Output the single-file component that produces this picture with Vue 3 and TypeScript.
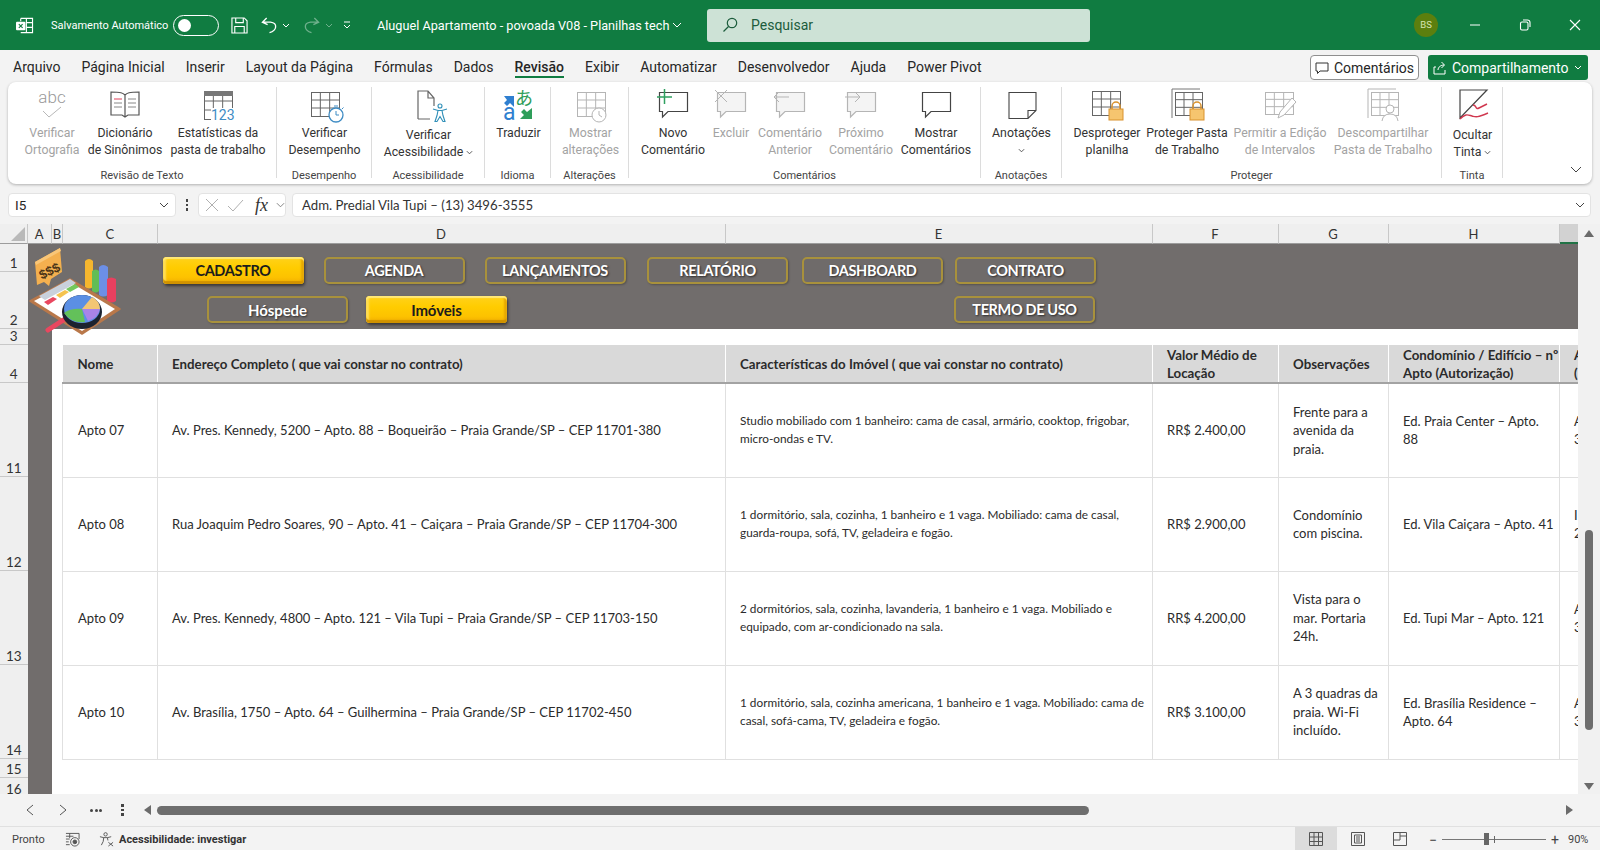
<template>
  <div class="app">
    <!-- barra de titulo -->
    <header class="titlebar">
      <svg class="xl-icon" viewBox="0 0 20 18" fill="none" stroke="#fff" stroke-width="1.2">
        <path d="M6 1.5h12.5v15H6M12 1.5v15M12 6h6.5M12 11h6.5M6 1.5v3" />
        <rect x="1" y="5" width="10" height="9" rx="1" fill="#fff" stroke="none" />
        <path d="M4 7.5l4 4M8 7.5l-4 4" stroke="#107c41" />
      </svg>
      <span class="autosave">Salvamento Automático</span>
      <span class="toggle"><i></i></span>
      <svg class="qa save" viewBox="0 0 18 18" fill="none" stroke="#fff" stroke-width="1.2">
        <path d="M1 1h13l3 3v13H1zM5 1v5h8V1M4 17v-7h10v7" />
      </svg>
      <svg class="qa undo" viewBox="0 0 18 18" fill="none" stroke="#fff" stroke-width="1.4">
        <path d="M6 1L1.5 5.5 7 8M2 5.5h8c8 1 7 9-1 11" />
      </svg>
      <svg class="mini c1" viewBox="0 0 8 5" fill="none" stroke="#fff"><path d="M1 1l3 3 3-3" /></svg>
      <svg class="qa redo" viewBox="0 0 18 18" fill="none" stroke="#6fb08c" stroke-width="1.4">
        <path d="M12 1l4.500 4.500L11 8M16 5.500H8c-8 1-7 9 1 11" />
      </svg>
      <svg class="mini c2" viewBox="0 0 8 5" fill="none" stroke="#6fb08c"><path d="M1 1l3 3 3-3" /></svg>
      <svg class="mini c3" viewBox="0 0 8 8" fill="none" stroke="#fff"><path d="M1 1h6M1 4l3 3 3-3" /></svg>
      <span class="doc-title">Aluguel Apartamento - povoada V08 - Planilhas tech</span>
      <svg class="mini c4" viewBox="0 0 10 6" fill="none" stroke="#fff"><path d="M1 1l4 4 4-4" /></svg>
      <div class="search">
        <svg viewBox="0 0 16 16" fill="none" stroke="#1c5c3c" stroke-width="1.2">
          <circle cx="10" cy="6" r="4.700" /><path d="M6.500 9.500L1.500 14.500" />
        </svg>
        <span>Pesquisar</span>
      </div>
      <span class="avatar">BS</span>
      <div class="win-btns">
        <svg viewBox="0 0 12 12" fill="none" stroke="#fff"><path d="M1 6h10" /></svg>
        <svg viewBox="0 0 12 12" fill="none" stroke="#fff" stroke-width="1.100">
          <rect x="1.500" y="3" width="7.500" height="8" rx="1.500" /><path d="M4 1h4.500A2.500 2.500 0 0 1 11 3.500V8" />
        </svg>
        <svg viewBox="0 0 12 12" fill="none" stroke="#fff" stroke-width="1.100"><path d="M1 1l10 10M11 1L1 11" /></svg>
      </div>
    </header>

    <!-- abas -->
    <nav class="tabs">
      <span v-for="t in tabs" :key="t" class="tab" :class="{ active: t === 'Revisão' }">{{ t }}</span>
      <button class="comments-btn">
        <svg viewBox="0 0 14 14" fill="none" stroke="#333"><path d="M1 2h12v8H5l-2.500 2.500V10H1z" /></svg>
        Comentários
      </button>
      <button class="share-btn">
        <svg viewBox="0 0 14 14" fill="none" stroke="#fff"><path d="M3 6H1v7h11V9M5 9c0-3 3-5 6-5M8.500 1l3 3-3 3" /></svg>
        Compartilhamento
        <svg class="chev" viewBox="0 0 8 5" fill="none" stroke="#fff"><path d="M1 1l3 3 3-3" /></svg>
      </button>
    </nav>

    <!-- faixa de opcoes -->
    <section class="ribbon">
      <div
        v-for="g in groups"
        :key="g.label"
        class="r-group"
        :style="{ width: g.w + 'px' }"
      >
        <div class="r-buttons" :style="{ paddingLeft: g.pad + 'px' }">
          <div
            v-for="b in g.buttons"
            :key="b.text"
            class="r-btn"
            :class="{ off: b.off, low: b.low }"
            :style="{ width: b.w + 'px' }"
          >
            <svg class="r-icon" viewBox="0 0 36 36" v-html="icons[b.icon]"></svg>
            <span class="r-text">{{ b.text }}<svg
                v-if="b.chev"
                class="r-chev"
                viewBox="0 0 8 5"
                fill="none"
                stroke="#444"
              ><path d="M1 1l3 3 3-3" /></svg></span>
          </div>
        </div>
        <div class="r-label">{{ g.label }}</div>
      </div>
      <svg class="r-collapse" viewBox="0 0 12 7" fill="none" stroke="#444"><path d="M1 1l5 5 5-5" /></svg>
    </section>

    <!-- barra de formulas -->
    <div class="formula">
      <div class="namebox">
        <span>I5</span>
        <svg viewBox="0 0 10 6" fill="none" stroke="#444"><path d="M1 1l4 4 4-4" /></svg>
      </div>
      <div class="dots"><i></i><i></i><i></i></div>
      <div class="fx-box">
        <svg class="fx-x" viewBox="0 0 14 14" fill="none" stroke="#b0b0b0"><path d="M1 1l12 12M13 1L1 13" /></svg>
        <svg class="fx-ok" viewBox="0 0 17 13" fill="none" stroke="#b0b0b0"><path d="M1 7l5 5L16 1" /></svg>
        <em>fx</em>
        <svg class="fx-chev" viewBox="0 0 10 6" fill="none" stroke="#777"><path d="M1 1l4 4 4-4" /></svg>
      </div>
      <div class="f-input">
        <span>Adm. Predial Vila Tupi – (13) 3496-3555</span>
        <svg viewBox="0 0 10 6" fill="none" stroke="#444"><path d="M1 1l4 4 4-4" /></svg>
      </div>
    </div>

    <!-- planilha -->
    <div class="sheet-wrap">
      <div class="sheet">
        <div class="col-heads">
          <div class="corner"><i></i></div>
          <div
            v-for="c in cols"
            :key="c.name"
            class="col-head"
            :class="{ selected: c.name === 'I' }"
            :style="{ width: c.w + 'px' }"
          >{{ c.name === 'I' ? '' : c.name }}</div>
        </div>
        <div class="sheet-body">
          <div class="row-heads">
            <div v-for="r in rowHeads" :key="r.n" class="row-head" :style="{ height: r.h + 'px' }">
              {{ r.n }}
            </div>
          </div>
          <div class="cells">
            <div class="band">
              <div class="nav-row first">
                <button v-for="n in navTop" :key="n" class="nav-btn" :class="{ on: n === 'CADASTRO' }">{{ n }}</button>
              </div>
              <div class="nav-row second">
                <button class="nav-btn sub">Hóspede</button>
                <button class="nav-btn sub on">Imóveis</button>
                <button class="nav-btn termo">TERMO DE USO</button>
              </div>
            </div>
            <div class="lower">
              <div class="strip"></div>
              <div class="table-wrap">
                <table class="grid-table">
                  <colgroup>
                    <col v-for="w in tableCols" :key="w" :style="{ width: w + 'px' }" />
                  </colgroup>
                  <thead>
                    <tr>
                      <th v-for="h in tableHead" :key="h">{{ h }}</th>
                    </tr>
                  </thead>
                  <tbody>
                    <tr v-for="a in apartments" :key="a.nome">
                      <td>{{ a.nome }}</td>
                      <td>{{ a.endereco }}</td>
                      <td class="small">{{ a.carac }}</td>
                      <td>{{ a.valor }}</td>
                      <td>{{ a.obs }}</td>
                      <td>{{ a.cond }}</td>
                      <td>{{ a.adm }}</td>
                    </tr>
                  </tbody>
                </table>
              </div>
            </div>
          </div>
          <!-- logo sobre a faixa -->
          <svg class="logo" viewBox="0 0 120 100">
            <path d="M15 22L40 8l2 24-11 7-2 7-5-4-7 3z" fill="#f4b04f" />
            <path d="M15 22L40 8l1 3-25 14z" fill="#f9c678" />
            <text x="18" y="36" font-size="13" font-weight="700" font-family="Liberation Sans, sans-serif" fill="#4a3418" transform="rotate(-26 28 30)">$$$</text>
            <path d="M65 21q4-4 8 0v26q-4 3-8 0z" fill="#f5b62e" />
            <path d="M72 31q4-3 7 0v20q-3 3-7 0z" fill="#62bd55" />
            <path d="M79 27q4-4 9 0v28q-5 3-9 0z" fill="#6c8fe6" />
            <path d="M87 39q4-3 9 0v22q-5 3-9 0z" fill="#e8405f" />
            <path d="M10 61l40-22 50 30-38 25z" fill="#b9784a" stroke="#b9784a" stroke-width="1.500" stroke-linejoin="round" />
            <path d="M14 61l36-19 45 27-33 22z" fill="#fff" />
            <path d="M19 56l31-17 6 4-31 17z" fill="#c9d1dc" />
            <path d="M24 62l9-5 4 2-9 6z" fill="#e9475f" />
            <path d="M36 55l9-5 4 2-9 6z" fill="#f5c34e" />
            <path d="M46 49l9-5 4 3-9 5z" fill="#74c95c" />
            <path d="M28 90l20-13" stroke="#e9475f" stroke-width="5" stroke-linecap="round" />
            <ellipse cx="62" cy="72" rx="20" ry="17" fill="#1c2330" />
            <ellipse cx="62" cy="69" rx="18" ry="14" fill="#5b8fe4" />
            <path d="M62 69l10-12q8 4 8 12z" fill="#f3c674" />
            <path d="M62 69l18 0q-2 9-12 12z" fill="#a983e8" />
            <path d="M62 69l3 13q-13 2-21-9 7-5 18-4z" fill="#63c15a" />
          </svg>
        </div>
      </div>
      <aside class="v-scroll">
        <svg viewBox="0 0 10 7" fill="#6b6b6b"><path d="M5 0l5 7H0z" /></svg>
        <div class="v-track"><i></i></div>
        <svg viewBox="0 0 10 7" fill="#6b6b6b"><path d="M0 0h10L5 7z" /></svg>
      </aside>
    </div>

    <!-- abas de planilha -->
    <div class="sheet-tabs">
      <svg class="st-icon prev" viewBox="0 0 8 12" fill="none" stroke="#555"><path d="M7 1L1 6l6 5" /></svg>
      <svg class="st-icon next" viewBox="0 0 8 12" fill="none" stroke="#555"><path d="M1 1l6 5-6 5" /></svg>
      <span class="more"><i></i><i></i><i></i></span>
      <span class="vdots"><i></i><i></i><i></i></span>
      <svg class="arrow-l" viewBox="0 0 7 10" fill="#6b6b6b"><path d="M7 0v10L0 5z" /></svg>
      <div class="h-thumb"></div>
      <svg class="arrow-r" viewBox="0 0 7 10" fill="#6b6b6b"><path d="M0 0v10l7-5z" /></svg>
    </div>

    <!-- barra de status -->
    <footer class="status">
      <span class="ready">Pronto</span>
      <svg class="st-rec" viewBox="0 0 16 16" fill="none" stroke="#555">
        <path d="M1 1.500h14M1 4.500h8M1 7.500h4M1 10.500h3M1 13.500h4M5 1.500v5M15 1.500v6" />
        <circle cx="10.500" cy="10.500" r="4.500" /><circle cx="10.500" cy="10.500" r="2" fill="#555" />
      </svg>
      <svg class="st-a11y" viewBox="0 0 16 16" fill="none" stroke="#555">
        <circle cx="7" cy="2.500" r="1.800" />
        <path d="M1 5l4 1h4l4-1M5 6l-.5 4-2 4M9 6l.5 3M10 11l5 4M15 11l-5 4" />
      </svg>
      <span class="a11y-text">Acessibilidade: investigar</span>
      <div class="views">
        <span class="view on">
          <svg viewBox="0 0 14 14" fill="none" stroke="#555"><path d="M.5.5h13v13H.5zM5 .5v13M9.500.5v13M.5 5h13M.5 9.500h13" /></svg>
        </span>
        <span class="view">
          <svg viewBox="0 0 14 14" fill="none" stroke="#555"><path d="M.5.5h13v13H.5zM3.500 3h7v8h-7zM5 5h4M5 7h4M5 9h4" /></svg>
        </span>
        <span class="view">
          <svg viewBox="0 0 14 14" fill="none" stroke="#555"><path d="M.5.5h13v13H.5zM.5 8h6.500V.5M7 4h6.500" /></svg>
        </span>
      </div>
      <div class="zoom-ctl">
        <span class="z-sign">−</span>
        <div class="slider"><i class="tick"></i><i class="knob"></i></div>
        <span class="z-sign">+</span>
        <span class="z-val">90%</span>
      </div>
    </footer>
  </div>
</template>

<script setup lang="ts">
interface RibbonBtn {
  text: string
  icon: string
  w: number
  off?: boolean
  low?: boolean
  chev?: boolean
}

interface RibbonGroup {
  label: string
  w: number
  pad: number
  buttons: RibbonBtn[]
}

const tabs = [
  'Arquivo', 'Página Inicial', 'Inserir', 'Layout da Página', 'Fórmulas', 'Dados',
  'Revisão', 'Exibir', 'Automatizar', 'Desenvolvedor', 'Ajuda', 'Power Pivot'
]

// desenha uma tabelinha dos icones da faixa
const grid = (x: number, y: number, w: number, h: number, c = '#666') =>
  `<g fill="none" stroke="${c}"><rect x="${x + 0.5}" y="${y + 0.5}" width="${w}" height="${h}"/>` +
  `<path d="M${x} ${y + h / 3}h${w}M${x} ${y + (2 * h) / 3}h${w}M${x + w / 3} ${y}v${h}M${x + (2 * w) / 3} ${y}v${h}"/></g>`

const bubble = (c: string, fill = 'none') =>
  `<path d="M4.500 4.500h28v19H13l-5.500 5.500v-5.500h-3z" fill="${fill}" stroke="${c}" stroke-width="1.200"/>`

const lock = (x: number, y: number) =>
  `<path d="M${x + 3} ${y + 8}v-3a4 4 0 0 1 8 0v3" fill="none" stroke="#d9922e" stroke-width="1.500"/>` +
  `<rect x="${x}" y="${y + 8}" width="14" height="11" fill="#f6c56f" stroke="#d9922e"/>`

const icons: Record<string, string> = {
  abc:
    `<text x="18" y="15" text-anchor="middle" font-size="17" font-family="Roboto, sans-serif" font-weight="300" fill="#9a9a9a">abc</text>` +
    `<path d="M9 23l6 6 12-10" fill="none" stroke="#b8b8b8"/>`,
  book:
    `<path d="M18 7c-2-2-4-3-14-3v23h11l3 2 3-2h11V4c-10 0-12 1-14 3zM18 7v22" fill="none" stroke="#555" stroke-width="1.200"/>` +
    `<path d="M7 11h8" stroke="#e0405a"/><path d="M7 15h8M7 19h8M21 11h8M21 15h8M21 19h8" stroke="#888"/>`,
  stats:
    grid(4, 4, 28, 27) +
    `<rect x="4" y="3" width="29" height="5" fill="#777"/><rect x="11" y="20" width="24" height="13" fill="#fff"/>` +
    `<text x="11" y="32" font-size="14" font-family="Roboto, sans-serif" fill="#3f8cc4">123</text>`,
  perf:
    grid(4, 4, 28, 24) +
    `<circle cx="29" cy="27" r="7" fill="#fff" stroke="#3f8cc4" stroke-width="1.300"/><path d="M29 23v4h3M27 18h4M35 21l1.500-1.500" fill="none" stroke="#3f8cc4"/>`,
  a11y:
    `<path d="M7 31V3h10l6 7v8M17 3v7h6M7 31h12" fill="none" stroke="#666" stroke-width="1.200"/>` +
    `<g transform="translate(3 1)" fill="none" stroke="#2f8fb8" stroke-width="1.100"><circle cx="26" cy="17" r="2"/><path d="M19 20l5 1.500h4l5-1.500M24 21.500l-1 5-2 6h2l3-5 3 5h2l-2-6-1-5"/></g>`,
  translate:
    `<path d="M3 8h10v11l-4-4-3 3-3-3 3-3z" fill="#2f7fd0"/>` +
    `<text x="14" y="17" font-size="18" font-family="Noto Sans CJK JP, sans-serif" fill="#2f9e5a">あ</text>` +
    `<text x="2" y="32" font-size="23" font-family="Roboto, sans-serif" fill="#2f7fd0">a</text>` +
    `<path d="M31 20v11H19l4-4-3-3 3-3 3 3z" fill="#2f9e5a"/>`,
  changes:
    grid(4, 4, 28, 24, '#b5b5b5') +
    `<circle cx="26" cy="27" r="7" fill="#fff" stroke="#b5b5b5"/><path d="M26 23v4l3 2" fill="none" stroke="#b5b5b5"/>`,
  newc:
    bubble('#444') + `<path d="M2 9h15M9.500 1v15" stroke="#2fa060" stroke-width="1.500"/>`,
  delc:
    bubble('#b5b5b5', '#f4f4f4') + `<path d="M2 2l12 12M14 2L2 14" stroke="#b5b5b5"/>`,
  prevc:
    bubble('#b5b5b5', '#f4f4f4') + `<path d="M17 9H2M7 4L2 9l5 5" fill="none" stroke="#b5b5b5"/>`,
  nextc:
    bubble('#b5b5b5', '#f4f4f4') + `<path d="M2 9h15M12 4l5 5-5 5" fill="none" stroke="#b5b5b5"/>`,
  showc: bubble('#444'),
  note:
    `<path d="M5 4.500h27v18l-8 8H5zM32 22.500h-8v8" fill="none" stroke="#444" stroke-width="1.100"/>`,
  unprot: grid(3, 3, 28, 24) + lock(20, 13),
  prot:
    `<path d="M3 30V1h28" fill="none" stroke="#777"/>` + grid(6, 4, 27, 23) + lock(21, 13),
  range:
    grid(3, 4, 28, 22, '#b5b5b5') +
    `<path d="M16 30l2-6L30 10l4 4-12 13z" fill="#fff" stroke="#b5b5b5"/>`,
  unshare:
    `<path d="M3 30V1h28" fill="none" stroke="#b5b5b5"/>` +
    grid(6, 4, 27, 23, '#b5b5b5') +
    `<circle cx="25" cy="21" r="4" fill="#fff" stroke="#b5b5b5"/><path d="M17 33q1-7 8-7t8 7" fill="#fff" stroke="#b5b5b5"/>`,
  ink:
    `<path d="M5 30V2h27z" fill="none" stroke="#444" stroke-width="1.200"/>` +
    `<path d="M18 17c4 0 2 5 6 3l8-4M5 31c6-6 8-4 12-3s4 2 16-3" fill="none" stroke="#d0384f" stroke-width="1.400"/>`
}

const groups: RibbonGroup[] = [
  {
    label: 'Revisão de Texto', w: 269, pad: 12,
    buttons: [
      { text: 'Verificar\nOrtografia', icon: 'abc', w: 64, off: true },
      { text: 'Dicionário\nde Sinônimos', icon: 'book', w: 82 },
      { text: 'Estatísticas da\npasta de trabalho', icon: 'stats', w: 104 }
    ]
  },
  { label: 'Desempenho', w: 95, pad: 0, buttons: [{ text: 'Verificar\nDesempenho', icon: 'perf', w: 95 }] },
  { label: 'Acessibilidade', w: 113, pad: 0, buttons: [{ text: 'Verificar\nAcessibilidade ', icon: 'a11y', w: 113, low: true, chev: true }] },
  { label: 'Idioma', w: 66, pad: 1, buttons: [{ text: 'Traduzir', icon: 'translate', w: 65 }] },
  { label: 'Alterações', w: 78, pad: 1, buttons: [{ text: 'Mostrar\nalterações', icon: 'changes', w: 77, off: true }] },
  {
    label: 'Comentários', w: 352, pad: 15,
    buttons: [
      { text: 'Novo\nComentário', icon: 'newc', w: 58 },
      { text: 'Excluir', icon: 'delc', w: 58, off: true },
      { text: 'Comentário\nAnterior', icon: 'prevc', w: 60, off: true },
      { text: 'Próximo\nComentário', icon: 'nextc', w: 82, off: true },
      { text: 'Mostrar\nComentários', icon: 'showc', w: 68 }
    ]
  },
  { label: 'Anotações', w: 81, pad: 0, buttons: [{ text: 'Anotações\n', icon: 'note', w: 81, chev: true }] },
  {
    label: 'Proteger', w: 380, pad: 5,
    buttons: [
      { text: 'Desproteger\nplanilha', icon: 'unprot', w: 80 },
      { text: 'Proteger Pasta\nde Trabalho', icon: 'prot', w: 80 },
      { text: 'Permitir a Edição\nde Intervalos', icon: 'range', w: 106, off: true },
      { text: 'Descompartilhar\nPasta de Trabalho', icon: 'unshare', w: 100, off: true }
    ]
  },
  { label: 'Tinta', w: 61, pad: 0, buttons: [{ text: 'Ocultar\nTinta ', icon: 'ink', w: 61, low: true, chev: true }] }
]

const cols = [
  { name: 'A', w: 24.5 }, { name: 'B', w: 11 }, { name: 'C', w: 94.5 }, { name: 'D', w: 568 },
  { name: 'E', w: 427 }, { name: 'F', w: 126 }, { name: 'G', w: 110 }, { name: 'H', w: 171 }, { name: 'I', w: 19 }
]

const rowHeads = [
  { n: 1, h: 28 }, { n: 2, h: 57 }, { n: 3, h: 16 }, { n: 4, h: 38 },
  { n: 11, h: 94 }, { n: 12, h: 94 }, { n: 13, h: 94 }, { n: 14, h: 94 },
  { n: 15, h: 19 }, { n: 16, h: 16 }
]

const navTop = ['CADASTRO', 'AGENDA', 'LANÇAMENTOS', 'RELATÓRIO', 'DASHBOARD', 'CONTRATO']

const tableCols = [95, 568, 427, 126, 110, 171, 19]

const tableHead = [
  'Nome',
  'Endereço Completo ( que vai constar no contrato)',
  'Características do Imóvel ( que vai constar no contrato)',
  'Valor Médio de\nLocação',
  'Observações',
  'Condomínio / Edifício – nº\nApto (Autorização)',
  'A\n('
]

const apartments = [
  {
    nome: 'Apto 07',
    endereco: 'Av. Pres. Kennedy, 5200 – Apto. 88 – Boqueirão – Praia Grande/SP – CEP 11701-380',
    carac: 'Studio mobiliado com 1 banheiro: cama de casal, armário, cooktop, frigobar,\nmicro-ondas e TV.',
    valor: 'RR$ 2.400,00',
    obs: 'Frente para a\navenida da\npraia.',
    cond: 'Ed. Praia Center – Apto.\n88',
    adm: 'A\n3'
  },
  {
    nome: 'Apto 08',
    endereco: 'Rua Joaquim Pedro Soares, 90 – Apto. 41 – Caiçara – Praia Grande/SP – CEP 11704-300',
    carac: '1 dormitório, sala, cozinha, 1 banheiro e 1 vaga. Mobiliado: cama de casal,\nguarda-roupa, sofá, TV, geladeira e fogão.',
    valor: 'RR$ 2.900,00',
    obs: 'Condomínio\ncom piscina.',
    cond: 'Ed. Vila Caiçara – Apto. 41',
    adm: 'I\n2'
  },
  {
    nome: 'Apto 09',
    endereco: 'Av. Pres. Kennedy, 4800 – Apto. 121 – Vila Tupi – Praia Grande/SP – CEP 11703-150',
    carac: '2 dormitórios, sala, cozinha, lavanderia, 1 banheiro e 1 vaga. Mobiliado e\nequipado, com ar-condicionado na sala.',
    valor: 'RR$ 4.200,00',
    obs: 'Vista para o\nmar. Portaria\n24h.',
    cond: 'Ed. Tupi Mar – Apto. 121',
    adm: 'A\n3'
  },
  {
    nome: 'Apto 10',
    endereco: 'Av. Brasília, 1750 – Apto. 64 – Guilhermina – Praia Grande/SP – CEP 11702-450',
    carac: '1 dormitório, sala, cozinha americana, 1 banheiro e 1 vaga. Mobiliado: cama de\ncasal, sofá-cama, TV, geladeira e fogão.',
    valor: 'RR$ 3.100,00',
    obs: 'A 3 quadras da\npraia. Wi-Fi\nincluído.',
    cond: 'Ed. Brasília Residence –\nApto. 64',
    adm: 'A\n3'
  }
]
</script>

<style scoped>
/* ========== estrutura ========== */
.app {
  width: 1600px;
  height: 850px;
  display: flex;
  flex-direction: column;
  overflow: hidden;
  background: #f3f3f3;
  color: #262626;
  font-family: Roboto, "Liberation Sans", sans-serif;
}

svg {
  display: block;
  flex-shrink: 0;
}

/* ========== barra de titulo ========== */
.titlebar {
  height: 50px;
  flex-shrink: 0;
  display: flex;
  align-items: center;
  background: #107c41;
  color: #fff;
}

.xl-icon {
  width: 19px;
  height: 17px;
  margin-left: 15px;
}

.autosave {
  margin-left: 17px;
  font-size: 11px;
  width: 120px;
  white-space: nowrap;
}

.toggle {
  width: 46px;
  height: 21px;
  margin-left: 2px;
  box-sizing: border-box;
  border: 1.5px solid #fff;
  border-radius: 11px;
  display: flex;
  align-items: center;
  padding-left: 4px;
}

.toggle i {
  width: 13px;
  height: 13px;
  border-radius: 50%;
  background: #fff;
}

.qa {
  width: 17px;
  height: 17px;
}

.save { margin-left: 12px; }
.undo { margin-left: 13px; }
.mini { width: 8px; height: 5px; }
.c1 { margin-left: 4px; }
.redo { margin-left: 13px; }
.c2 { margin-left: 5px; }
.c3 { margin-left: 10px; height: 8px; }

.doc-title {
  margin-left: 26px;
  font-size: 12.700px;
  width: 292px;
  white-space: nowrap;
}

.c4 {
  width: 10px;
  height: 6px;
  margin-left: 3px;
}

.search {
  width: 383px;
  height: 33px;
  margin-left: 25px;
  display: flex;
  align-items: center;
  background: #cde2d6;
  border-radius: 3px;
  color: #1c5c3c;
  font-size: 14px;
}

.search svg {
  width: 16px;
  height: 16px;
  margin: 0 13px 0 15px;
}

.avatar {
  width: 24px;
  height: 24px;
  margin-left: 324px;
  border-radius: 50%;
  background: #5c7f0e;
  color: #d5e3b0;
  font-size: 9.500px;
  line-height: 24px;
  text-align: center;
}

.win-btns {
  display: flex;
  align-items: center;
  margin-left: 31px;
  gap: 38px;
}

.win-btns svg {
  width: 12px;
  height: 12px;
}

/* ========== abas ========== */
.tabs {
  height: 32px;
  flex-shrink: 0;
  box-sizing: border-box;
  padding-top: 2px;
  display: flex;
  align-items: center;
  gap: 21px;
  padding-left: 13px;
  font-size: 14px;
  position: relative;
}

.tab {
  position: relative;
  white-space: nowrap;
}

.tab.active {
  font-weight: 500;
}

.tab.active::after {
  content: "";
  position: absolute;
  left: 0;
  right: 0;
  bottom: -3px;
  height: 2px;
  background: #107c41;
}

.comments-btn,
.share-btn {
  height: 25px;
  box-sizing: border-box;
  display: flex;
  align-items: center;
  font-family: inherit;
  font-size: 14px;
  padding: 0;
  margin-top: 1px;
}

.comments-btn {
  width: 109px;
  margin-left: auto;
  justify-content: center;
  gap: 5px;
  background: #fff;
  border: 1px solid #8f8f8f;
  border-radius: 4px;
  color: #262626;
}

.comments-btn svg,
.share-btn svg {
  width: 14px;
  height: 14px;
}

.share-btn {
  width: 160px;
  margin-left: -12px;
  margin-right: 12px;
  gap: 5px;
  padding-left: 5px;
  background: #107c41;
  border: none;
  border-radius: 3px;
  color: #fff;
}

.share-btn svg.chev {
  width: 8px;
  height: 5px;
}

/* ========== faixa de opcoes ========== */
.ribbon {
  height: 102px;
  flex-shrink: 0;
  margin: 0 8px;
  padding-top: 5px;
  box-sizing: border-box;
  display: flex;
  position: relative;
  background: #fff;
  border-radius: 8px;
  box-shadow: 0 1px 3px rgba(0, 0, 0, 0.28);
}

.r-group {
  height: 91px;
  flex-shrink: 0;
  box-sizing: border-box;
  display: flex;
  flex-direction: column;
  border-right: 1px solid #dcdcdc;
}

.r-buttons {
  display: flex;
}

.r-btn {
  display: flex;
  flex-direction: column;
  align-items: center;
  flex-shrink: 0;
  color: #333;
}

.r-btn.off {
  color: #a3a3a3;
}

.r-icon {
  width: 36px;
  height: 36px;
  margin-top: 1px;
  margin-bottom: -5px;
  overflow: visible;
}

.r-text {
  margin-top: 6px;
  font-size: 12.300px;
  line-height: 17px;
  text-align: center;
  white-space: pre;
}

.r-btn.low .r-text {
  margin-top: 8px;
}

.r-chev {
  display: inline-block;
  width: 7px;
  height: 5px;
  vertical-align: 1px;
}

.r-label {
  margin-top: auto;
  margin-bottom: -4.500px;
  font-size: 11px;
  line-height: 14px;
  text-align: center;
  color: #444;
}

.r-collapse {
  position: absolute;
  right: 10px;
  bottom: 11px;
  width: 12px;
  height: 7px;
}

/* ========== barra de formulas ========== */
.formula {
  height: 24px;
  flex-shrink: 0;
  margin: 9px 9px 7px 8px;
  display: flex;
  align-items: stretch;
  font-size: 13.500px;
}

.namebox,
.fx-box,
.f-input {
  display: flex;
  align-items: center;
  background: #fff;
  border: 1px solid #e3e3e3;
  border-radius: 4px;
  box-sizing: border-box;
}

.namebox {
  width: 168px;
  padding: 0 6px 0 6px;
  justify-content: space-between;
}

.namebox svg,
.f-input svg {
  width: 10px;
  height: 6px;
}

.dots {
  width: 22px;
  display: flex;
  flex-direction: column;
  align-items: center;
  justify-content: center;
  gap: 2px;
}

.dots i {
  width: 2.500px;
  height: 2.500px;
  background: #444;
}

.fx-box {
  width: 88px;
  padding-left: 6px;
}

.fx-x {
  width: 14px;
  height: 14px;
}

.fx-ok {
  width: 17px;
  height: 13px;
  margin-left: 8px;
}

.fx-box em {
  font-family: "Liberation Serif", serif;
  font-size: 18px;
  color: #333;
  margin-left: 11px;
}

.fx-chev {
  width: 9px;
  height: 6px;
  margin-left: 8px;
}

.f-input {
  width: 1299px;
  margin-left: 6px;
  padding: 0 5px 0 9px;
  justify-content: space-between;
  font-family: Lato, sans-serif;
  font-size: 13.200px;
  color: #333;
}

/* ========== planilha ========== */
.sheet-wrap {
  height: 570px;
  flex-shrink: 0;
  display: flex;
  overflow: hidden;
}

.sheet {
  width: 1578px;
  flex-shrink: 0;
  background: #fff;
  font-family: Lato, sans-serif;
}

.col-heads {
  height: 20px;
  display: flex;
  background: #efefef;
}

.corner {
  width: 27.500px;
  flex-shrink: 0;
  position: relative;
  box-sizing: border-box;
  border-right: 1px solid #c8c8c8;
  border-bottom: 1px solid #9c9c9c;
}

.corner i {
  position: absolute;
  right: 2px;
  bottom: 2px;
  border-style: solid;
  border-width: 0 0 14px 14px;
  border-color: transparent transparent #b9b9b9 transparent;
}

.col-head {
  flex-shrink: 0;
  box-sizing: border-box;
  border-right: 1px solid #c8c8c8;
  border-bottom: 1px solid #9c9c9c;
  font-size: 13px;
  line-height: 20px;
  text-align: center;
  color: #333;
}

.col-head.selected {
  background: #d2d2d2;
  border-right: 0;
  border-bottom: 2px solid #217346;
}

.sheet-body {
  height: 550px;
  display: flex;
  position: relative;
  overflow: hidden;
}

.row-heads {
  width: 27.500px;
  flex-shrink: 0;
  background: #efefef;
}

.row-head {
  box-sizing: border-box;
  display: flex;
  align-items: flex-end;
  justify-content: center;
  font-size: 13.500px;
  line-height: 15px;
  color: #333;
  border-bottom: 1px solid #c8c8c8;
}

.row-head:last-child {
  line-height: 10px;
  border-bottom: 0;
}

.cells {
  flex: 1;
  min-width: 0;
}

/* ========== menu da planilha ========== */
.band {
  height: 85px;
  box-sizing: border-box;
  padding-top: 13px;
  background: #716d6c;
}

.nav-row {
  display: flex;
}

.nav-row.first {
  padding-left: 135px;
  gap: 20px;
}

.nav-row.first .nav-btn:nth-child(4) {
  margin-left: 1.500px;
}

.nav-row.first .nav-btn:nth-child(5) {
  margin-left: -6px;
}

.nav-row.first .nav-btn:nth-child(6) {
  margin-left: -8px;
}

.nav-row.second {
  margin-top: 12px;
  padding-left: 179.500px;
  gap: 18px;
}

.nav-btn {
  width: 141px;
  height: 27px;
  padding: 0;
  flex-shrink: 0;
  box-sizing: border-box;
  background: #6f6b6a;
  border: 2px solid #a8913c;
  border-radius: 5px;
  color: #fff;
  font-family: Lato, sans-serif;
  font-size: 14.500px;
  letter-spacing: -0.35px;
  font-weight: 700;
  text-shadow: 1px 1px 2px rgba(0, 0, 0, 0.6);
  box-shadow: 1px 1px 2px rgba(0, 0, 0, 0.25);
}

.nav-btn.sub {
  font-size: 15px;
  letter-spacing: -0.1px;
}

.nav-btn.on {
  border: none;
  border-radius: 4px;
  background: linear-gradient(#ffd21c 0, #ffcc00 40%, #fdc200 75%, #f0ac00 100%);
  color: #1c1c1c;
  text-shadow: none;
  box-shadow:
    inset 0 2px 1px #ffe878,
    inset 0 -3px 1px #d09200,
    inset 3px 0 2px #ffde55,
    inset -3px 0 2px #e6a800,
    1px 2px 3px rgba(0, 0, 0, 0.5);
}

.nav-btn.termo {
  margin-left: 429px;
}

.logo {
  position: absolute;
  left: 20px;
  top: -4px;
  width: 120px;
  height: 100px;
  pointer-events: none;
}

.lower {
  height: 465px;
  display: flex;
}

.strip {
  width: 24.500px;
  flex-shrink: 0;
  background: #716d6c;
}

.table-wrap {
  flex: 1;
  min-width: 0;
  padding: 16px 0 0 10px;
  overflow: hidden;
}

/* ========== tabela ========== */
.grid-table {
  width: 1516px;
  table-layout: fixed;
  border-collapse: collapse;
  font-size: 13px;
  line-height: 18.500px;
  color: #2b2b2b;
}

.grid-table th {
  height: 38px;
  padding: 0 0 0 14px;
  box-sizing: border-box;
  background: #d9d9d9;
  border-right: 1px solid #fff;
  border-bottom: 2px solid #a3a3a3;
  font-size: 13.300px;
  font-weight: 700;
  line-height: 18px;
  text-align: left;
  white-space: pre;
  overflow: hidden;
}

.grid-table td {
  height: 94px;
  padding: 0 0 0 14px;
  box-sizing: border-box;
  border: 1px solid #e0e0e0;
  white-space: pre;
  overflow: hidden;
}

.grid-table th:first-child,
.grid-table td:first-child {
  padding-left: 15px;
}

.grid-table td.small {
  font-size: 11.800px;
  line-height: 18px;
}

/* ========== rolagem ========== */
.v-scroll {
  flex: 1;
  display: flex;
  flex-direction: column;
  align-items: center;
  padding: 6px 0 4px;
  box-sizing: border-box;
  background: #f1f1f1;
}

.v-scroll svg {
  width: 10px;
  height: 7px;
}

.v-track {
  flex: 1;
  width: 8px;
}

.v-track i {
  display: block;
  width: 8px;
  height: 200px;
  margin-top: 293px;
  border-radius: 4px;
  background: #6e6e6e;
}

.sheet-tabs {
  height: 33px;
  flex-shrink: 0;
  display: flex;
  align-items: center;
  position: relative;
  border-bottom: 1px solid #e0e0e0;
  box-sizing: border-box;
}

.st-icon {
  width: 8px;
  height: 12px;
}

.prev { margin-left: 26px; }
.next { margin-left: 25px; }

.more {
  margin-left: 23px;
  width: 12px;
  display: flex;
  gap: 1.500px;
}

.more i {
  width: 3px;
  height: 3px;
  border-radius: 50%;
  background: #444;
}

.vdots {
  margin-left: 19px;
  display: flex;
  flex-direction: column;
  gap: 2px;
}

.vdots i {
  width: 2.500px;
  height: 2.500px;
  background: #444;
}

.arrow-l {
  width: 7px;
  height: 10px;
  margin-left: 20px;
}

.h-thumb {
  width: 932px;
  height: 9px;
  margin-left: 6px;
  border-radius: 5px;
  background: #6e6e6e;
}

.arrow-r {
  width: 7px;
  height: 10px;
  margin-left: 477px;
}

/* ========== status ========== */
.status {
  height: 23px;
  flex-shrink: 0;
  box-sizing: border-box;
  padding-top: 2px;
  display: flex;
  align-items: center;
  font-size: 11px;
  color: #444;
}

.ready {
  margin-left: 12px;
  width: 53px;
}

.st-rec,
.st-a11y {
  width: 15px;
  height: 15px;
}

.st-a11y {
  margin-left: 19px;
}

.a11y-text {
  margin-left: 5px;
  font-weight: 700;
  color: #333;
}

.views {
  margin-left: auto;
  margin-top: -2px;
  display: flex;
  height: 23px;
}

.view {
  width: 42px;
  display: flex;
  align-items: center;
  justify-content: center;
}

.view.on {
  background: #dcdcdc;
}

.view svg {
  width: 14px;
  height: 14px;
}

.zoom-ctl {
  width: 179px;
  display: flex;
  align-items: center;
  padding-left: 8px;
  box-sizing: border-box;
}

.z-sign {
  font-size: 14px;
  line-height: 14px;
}

.slider {
  width: 104px;
  height: 1px;
  margin: 0 5px;
  position: relative;
  background: #777;
}

.knob {
  position: absolute;
  left: 42px;
  top: -6px;
  width: 5px;
  height: 12px;
  background: #666;
}

.tick {
  position: absolute;
  left: 52px;
  top: -3px;
  width: 1px;
  height: 7px;
  background: #666;
}

.z-val {
  margin-left: 9px;
  font-size: 11px;
}
</style>

<style>
body {
  margin: 0;
}
</style>
